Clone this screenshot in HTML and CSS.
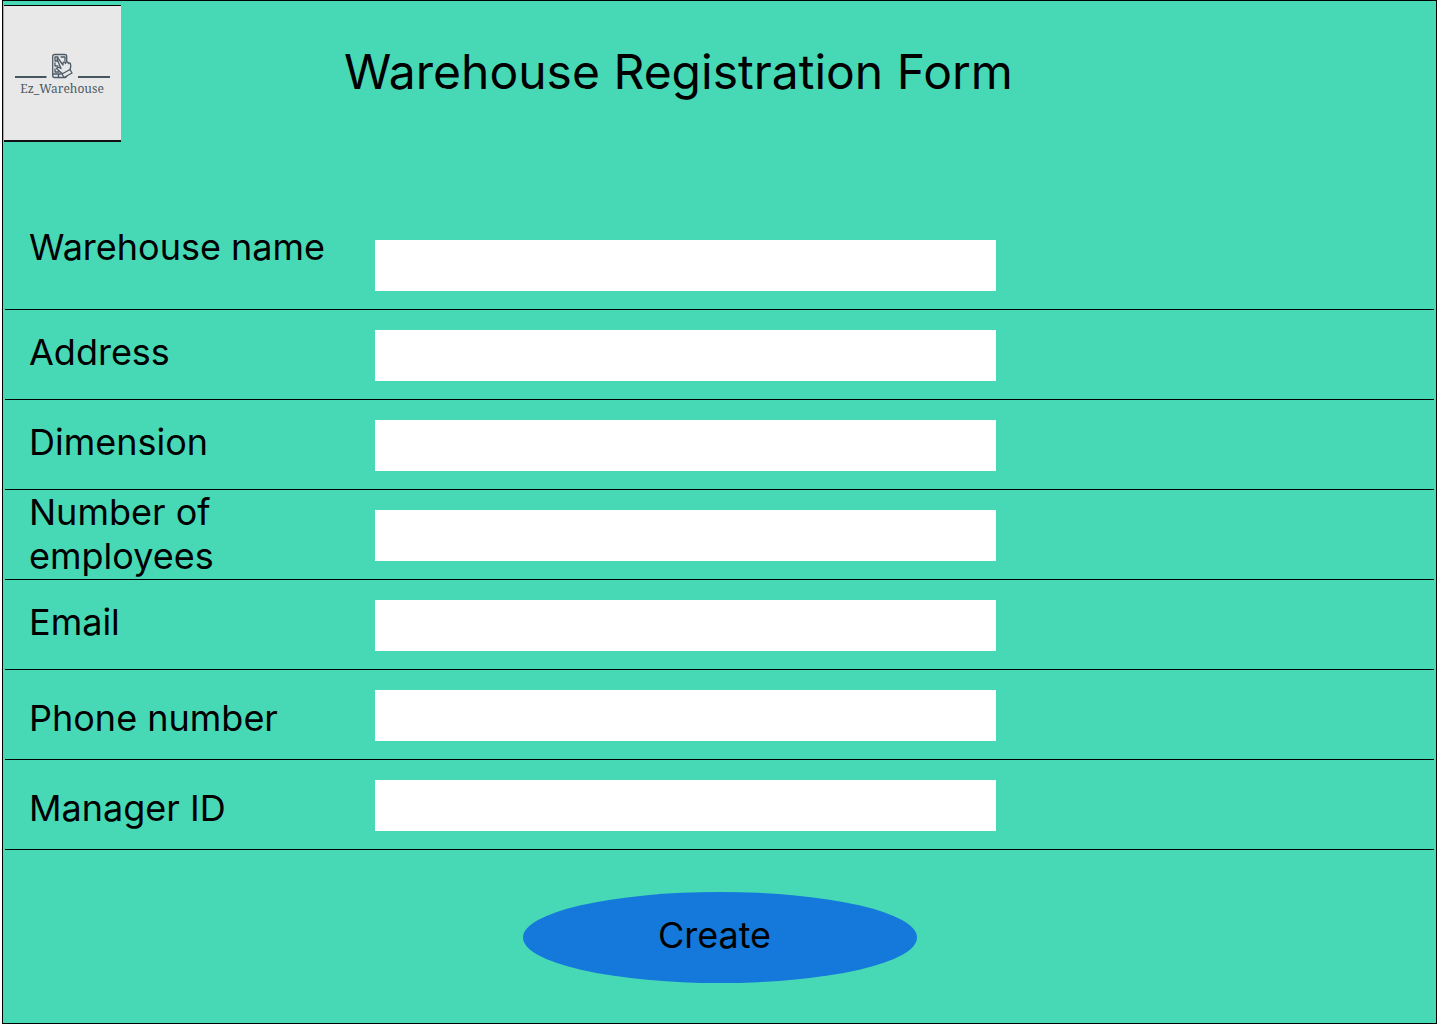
FILE: index.html
```html
<!DOCTYPE html>
<html lang="en">
<head>
<meta charset="utf-8">
<meta name="viewport" content="width=device-width, initial-scale=1">
<title>Warehouse Registration Form</title>
<link rel="stylesheet" href="styles.css">
</head>
<body>
<main class="page">
  <header class="header">
    <svg class="logo" viewBox="0 0 117 137" role="img" aria-label="Ez_Warehouse">
      <rect width="117" height="137" fill="#e8e8e8"/>
      <path d="M0 .5H117" stroke="#000"/>
      <path d="M0 136H117" stroke="#111" stroke-width="2"/>
      <path d="M11 72H42.500M74 72H106" stroke="#465661" stroke-width="2"/>
      <g fill="none" stroke="#4b5a66" stroke-width="1.300" stroke-linecap="round" stroke-linejoin="round">
        <rect x="48.700" y="49.500" width="14" height="23" rx="2"/>
        <path d="M49 69H57M54.500 69V72"/>
        <path d="M51 52H54V56H51ZM57 52H61V56M51 58V61H54M51 64V67H55"/>
        <path fill="#e8e8e8" d="M53 54C54 53 55 54 56 56L59 60C58.500 57 60.500 56 61.500 58.500C62 56 64 56.500 64.500 58.500C65.500 57 66.500 58 66.800 61L66 65L59 69C56 67 54 65 52.500 63.500C53 62 55 62 57 63.500Z"/>
        <path fill="#e8e8e8" d="M58 69L66 64.500L68 68L60 72.500Z"/>
      </g>
      <text x="58" y="88" text-anchor="middle" class="logo-name">Ez_Warehouse</text>
    </svg>
    <h1 class="title">Warehouse Registration Form</h1>
  </header>
  <form class="form">
    <div class="row">
      <label class="label label-top" for="name">Warehouse name</label>
      <input class="field" id="name" name="name" type="text">
    </div>
    <div class="row">
      <label class="label" for="address">Address</label>
      <input class="field" id="address" name="address" type="text">
    </div>
    <div class="row">
      <label class="label" for="dimension">Dimension</label>
      <input class="field" id="dimension" name="dimension" type="text">
    </div>
    <div class="row">
      <label class="label label-double" for="employees">Number of employees</label>
      <input class="field" id="employees" name="employees" type="number">
    </div>
    <div class="row">
      <label class="label" for="email">Email</label>
      <input class="field" id="email" name="email" type="email">
    </div>
    <div class="row">
      <label class="label label-low" for="phone">Phone number</label>
      <input class="field" id="phone" name="phone" type="tel">
    </div>
    <div class="row">
      <label class="label label-low" for="manager">Manager ID</label>
      <input class="field" id="manager" name="manager" type="text">
    </div>
    <button class="create" type="submit">Create</button>
  </form>
</main>
</body>
</html>
```
FILE: styles.css
```css
* { box-sizing: border-box; }

body {
  margin: 0;
  background: #fff;
  color: #000;
  font-family: Inter, "Liberation Sans", sans-serif;
}

.page {
  min-height: 100vh;
  margin: 0 3px 0 2px;
  border: 1px solid #000;
  background: #47d9b5;
}

.header {
  display: grid;
  grid-template-columns: 340px 1fr;
  align-items: start;
  padding: 4px 1px 0;
}

.logo {
  display: block;
  width: 117px;
  height: 137px;
}

.logo-name {
  font-family: "Noto Serif", "Liberation Serif", serif;
  font-size: 12px;
  fill: #4b5a66;
}

.title {
  margin: 38px 0 0;
  font-size: 48px;
  font-weight: 400;
  line-height: 58px;
}

.form {
  display: flex;
  flex-direction: column;
  padding: 78px 2px 40px;
}

.row {
  display: grid;
  grid-template-columns: 321px minmax(0, 621px);
  column-gap: 25px;
  height: 90px;
  padding-left: 24px;
  border-bottom: 1px solid #000;
}

.label {
  padding-top: 20px;
  font-size: 36px;
  line-height: 44px;
}

.label-top { padding-top: 5px; }
.label-low { padding-top: 26px; }
.label-double { max-width: 240px; padding-top: 0; }

.field {
  width: 100%;
  height: 51px;
  margin-top: 20px;
  padding: 0 12px;
  border: 0;
  border-radius: 0;
  background: #fff;
  font: inherit;
  font-size: 36px;
}

.create {
  align-self: center;
  width: 394px;
  height: 91px;
  margin-top: 42px;
  padding: 0 10px 6px 0;
  border: 0;
  border-radius: 50%;
  background: #1579db;
  color: #000;
  font: inherit;
  font-size: 36px;
  line-height: 44px;
  cursor: pointer;
}
```
